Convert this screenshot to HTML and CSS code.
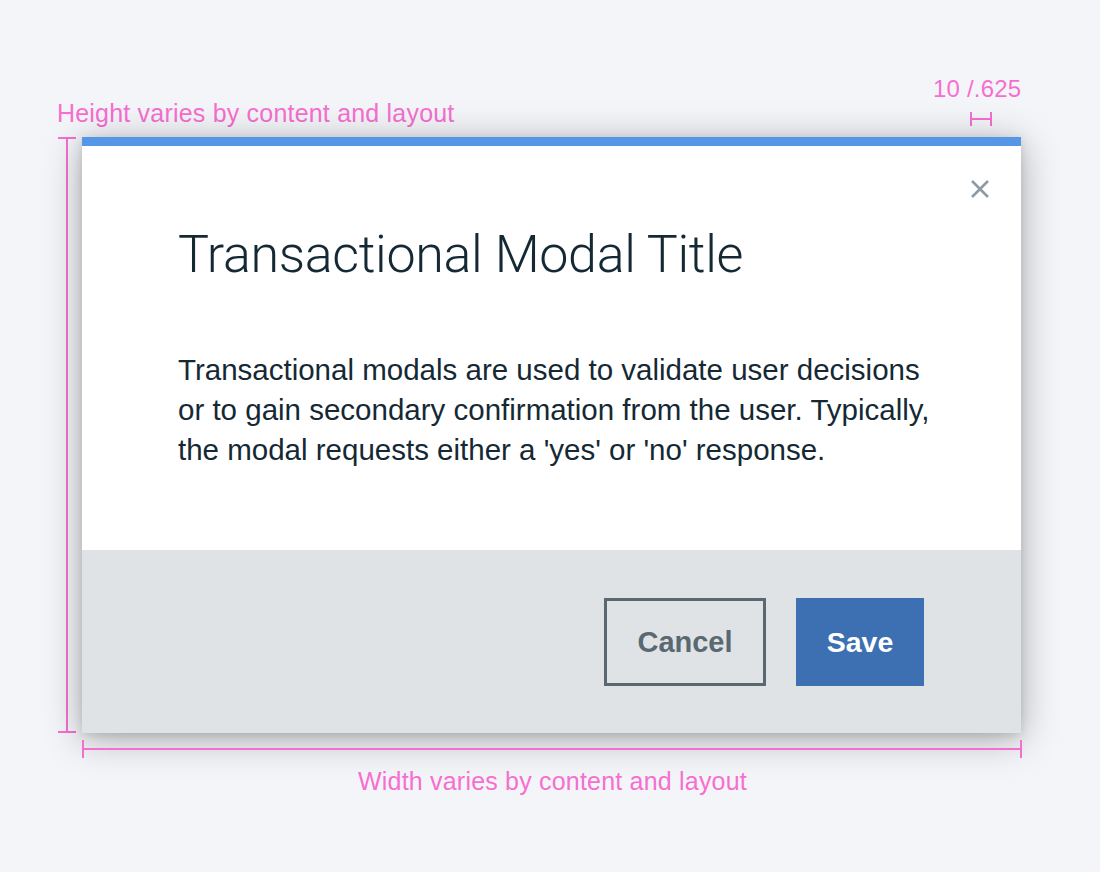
FILE: index.html
```html
<!DOCTYPE html>
<html>
<head>
<meta charset="utf-8">
<link rel="stylesheet" href="styles.css">
</head>
<body>
<div class="stage">
  <div class="note note-height">Height varies by content and layout</div>
  <div class="note note-pad">10 /.625</div>
  <div class="tick-h"></div>
  <div class="measure-v"></div>
  <div class="modal">
    <div class="modal-body">
      <button class="close" aria-label="Close">
        <svg width="20" height="20" viewBox="0 0 20 20"><path d="M2 2 L18 18 M18 2 L2 18" stroke="#8c9ba5" stroke-width="2.6" fill="none"/></svg>
      </button>
      <h1 class="title">Transactional Modal Title</h1>
      <p class="text">Transactional modals are used to validate user decisions or to gain secondary confirmation from the user. Typically, the modal requests either a 'yes' or 'no' response.</p>
    </div>
    <div class="modal-footer">
      <button class="btn btn-secondary">Cancel</button>
      <button class="btn btn-primary">Save</button>
    </div>
  </div>
  <div class="measure-h"></div>
  <div class="note note-width">Width varies by content and layout</div>
</div>
</body>
</html>
```

FILE: styles.css
```css
html, body {
  margin: 0;
  padding: 0;
}
body {
  background: #f4f5f9;
  font-family: "Liberation Sans", Arial, sans-serif;
  width: 1100px;
  height: 872px;
  overflow: hidden;
}
.stage {
  position: relative;
  padding-top: 137px;
  padding-left: 82px;
}
.note {
  position: absolute;
  color: #f66fd0;
  font-size: 25px;
  line-height: 30px;
  letter-spacing: 0.2px;
  white-space: nowrap;
}
.note-height { left: 57px; top: 98px; }
.note-pad { left: 933px; top: 74px; font-size: 24px; }
.note-width { left: 358px; top: 766px; }
.tick-h {
  position: absolute;
  left: 970px;
  top: 112px;
  width: 18px;
  height: 14px;
  border-left: 2px solid #f66fd0;
  border-right: 2px solid #f66fd0;
  background: linear-gradient(#f66fd0, #f66fd0) center / 100% 2px no-repeat;
}
.measure-v {
  position: absolute;
  left: 58px;
  top: 137px;
  width: 18px;
  height: 596px;
  box-sizing: border-box;
  border-top: 2px solid #f66fd0;
  border-bottom: 2px solid #f66fd0;
  background: linear-gradient(#f66fd0, #f66fd0) center / 2px 100% no-repeat;
}
.measure-h {
  position: absolute;
  left: 82px;
  top: 740px;
  width: 940px;
  height: 18px;
  box-sizing: border-box;
  border-left: 2px solid #f66fd0;
  border-right: 2px solid #f66fd0;
  background: linear-gradient(#f66fd0, #f66fd0) center / 100% 2px no-repeat;
}
.modal {
  width: 939px;
  border-top: 9px solid #5596e6;
  background: #fff;
  box-shadow: 0 6px 36px rgba(0, 0, 0, 0.3), 0 2px 10px rgba(0, 0, 0, 0.12);
  position: relative;
}
.modal-body {
  height: 404px;
  box-sizing: border-box;
  padding: 79px 80px 0 96px;
  position: relative;
}
.close {
  position: absolute;
  right: 31px;
  top: 33px;
  border: 0;
  padding: 0;
  background: none;
  width: 20px;
  height: 20px;
}
.close svg { display: block; }
.title {
  margin: 0;
  font-family: Roboto, "Liberation Sans", sans-serif;
  font-weight: 300;
  font-size: 52px;
  line-height: 60px;
  letter-spacing: -0.35px;
  color: #152935;
}
.text {
  margin: 65px 0 0;
  font-family: "Liberation Sans", Arial, sans-serif;
  font-size: 29.5px;
  line-height: 40px;
  color: #152935;
}
.modal-footer {
  height: 183px;
  background: #dfe3e6;
  display: flex;
  justify-content: flex-end;
  align-items: flex-start;
  gap: 30px;
  padding: 48px 97px 0 0;
  box-sizing: border-box;
}
.btn {
  height: 88px;
  font-family: "Liberation Sans", Arial, sans-serif;
  font-weight: 700;
  font-size: 29px;
  border: 0;
  padding: 0;
  box-sizing: border-box;
}
.btn-secondary {
  width: 162px;
  border: 3px solid #5a6872;
  background: transparent;
  color: #5a6872;
}
.btn-primary {
  width: 128px;
  background: #3d70b2;
  color: #fff;
  font-size: 28.5px;
}
```
